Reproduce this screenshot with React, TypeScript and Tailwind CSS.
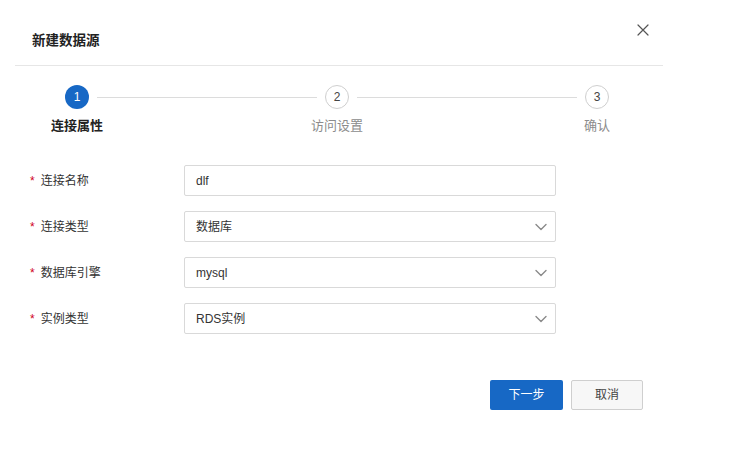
import React from "react";

const font = { fontFamily: '"Liberation Sans","Noto Sans CJK SC",sans-serif' };

function Chevron() {
  return (
    <svg width="12" height="8" viewBox="0 0 12 8" fill="none" className="shrink-0">
      <path d="M1 1.5L6 6.5L11 1.5" stroke="#8a8a8a" strokeWidth="1.4" strokeLinecap="round" strokeLinejoin="round" />
    </svg>
  );
}

function Field({ label, value, select }: { label: string; value: string; select?: boolean }) {
  return (
    <div className="flex items-center h-[31px]">
      <div className="w-[154px] flex items-center text-[12px] text-[#333]">
        <span className="text-[#d0021b] mr-[6px] text-[12px]">*</span>
        <span>{label}</span>
      </div>
      <div className="w-[372px] h-[31px] border border-[#d9d9d9] rounded-[2px] flex items-center justify-between pl-[11px] pr-[8px] text-[12px] text-[#333] bg-white">
        <span>{value}</span>
        {select && <Chevron />}
      </div>
    </div>
  );
}

function Circle({ n, active }: { n: number; active?: boolean }) {
  return active ? (
    <div className="w-6 h-6 rounded-full bg-[#1768c5] text-white text-[12px] flex items-center justify-center shrink-0">{n}</div>
  ) : (
    <div className="w-6 h-6 rounded-full border border-[#cfcfcf] bg-white text-[#444] text-[12px] flex items-center justify-center shrink-0">{n}</div>
  );
}

export default function App() {
  return (
    <div className="w-[739px] h-[464px] bg-white overflow-hidden" style={font}>
      <div className="ml-[15px] w-[648px]">
        <div className="h-[65px] border-b border-[#e6e6e6] box-content flex justify-between items-start">
          <div className="pl-[17px] pt-[33px] text-[13.5px] font-semibold text-[#222] leading-[16px]">新建数据源</div>
          <div className="pt-[24px] pr-[14px]">
            <svg width="12" height="12" viewBox="0 0 12 12" fill="none">
              <path d="M1 1L11 11M11 1L1 11" stroke="#555" strokeWidth="1.2" strokeLinecap="round" />
            </svg>
          </div>
        </div>

        <div className="ml-[50px] w-[544px] mt-[19px]">
          <div className="flex items-center">
            <Circle n={1} active />
            <div className="flex-1 h-px bg-[#dcdcdc] mx-2" />
            <Circle n={2} />
            <div className="flex-1 h-px bg-[#dcdcdc] mx-2" />
            <Circle n={3} />
          </div>
          <div className="flex justify-between mt-[8px] text-[13px] leading-[18px]">
            <div className="w-6 flex justify-center whitespace-nowrap font-bold text-[#222]">连接属性</div>
            <div className="w-6 flex justify-center whitespace-nowrap text-[#8c8c8c]">访问设置</div>
            <div className="w-6 flex justify-center whitespace-nowrap text-[#8c8c8c]">确认</div>
          </div>
        </div>

        <div className="ml-[15px] mt-[30px] flex flex-col gap-[15px]">
          <Field label="连接名称" value="dlf" />
          <Field label="连接类型" value="数据库" select />
          <Field label="数据库引擎" value="mysql" select />
          <Field label="实例类型" value="RDS实例" select />
        </div>

        <div className="flex justify-end gap-[8px] mt-[46px] pr-[20px]">
          <button className="w-[73px] h-[30px] rounded-[2px] bg-[#1768c5] text-white text-[12px]">下一步</button>
          <button className="w-[72px] h-[30px] rounded-[2px] bg-[#f7f7f7] border border-[#cfcfcf] text-[#444] text-[12px]">取消</button>
        </div>
      </div>
    </div>
  );
}
